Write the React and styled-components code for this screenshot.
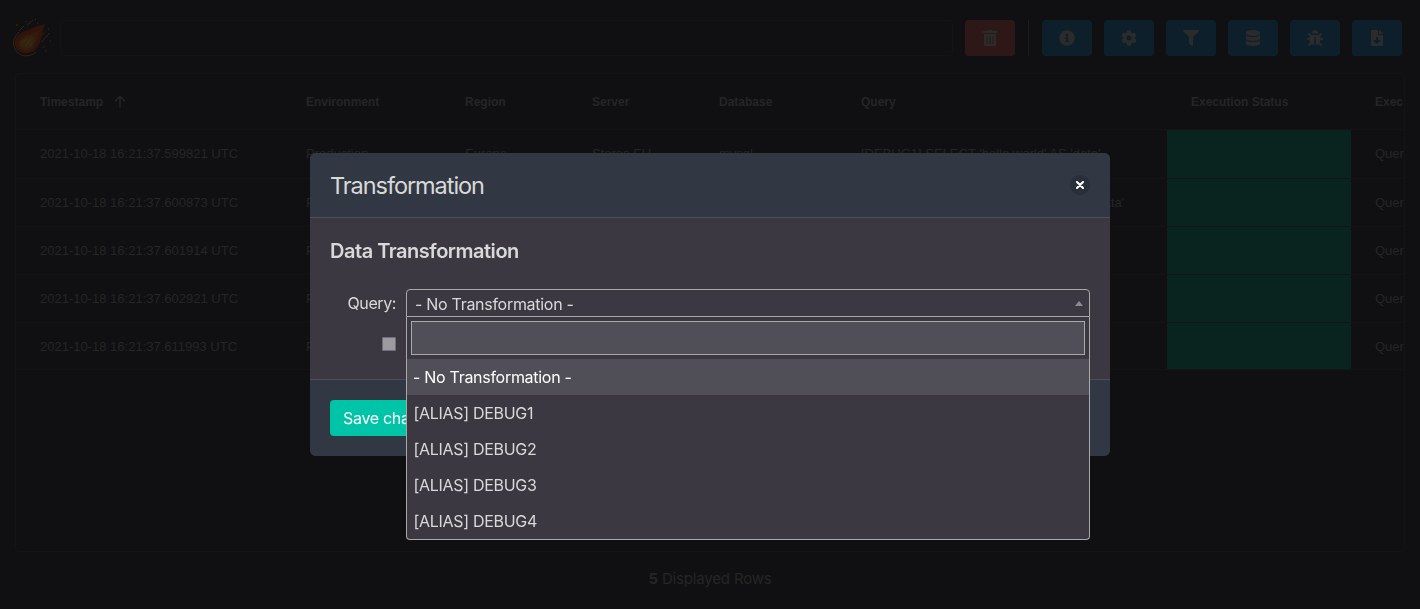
import React from 'react';
import styled, { createGlobalStyle } from 'styled-components';
import {
  FaTrashAlt, FaInfoCircle, FaCog, FaFilter, FaDatabase, FaBug, FaFileDownload,
} from 'react-icons/fa';

const colors = {
  page: '#101012',
  line: '#141415',
  dimText: '#252525',
  body: '#3b3842',
  bar: '#313843',
  divider: '#514d58',
  outline: '#a9a9aa',
  field: '#504e57',
  text: '#d9d9d9',
};

const GlobalStyle = createGlobalStyle`
  * { box-sizing: border-box; }
  body {
    margin: 0;
    background: ${colors.page};
    font-family: Inter, "Liberation Sans", sans-serif;
    overflow: hidden;
  }
`;

const Page = styled.div`
  display: flex;
  flex-direction: column;
  height: 609px;
  overflow: hidden;
  background: ${colors.page};
  color: ${colors.dimText};
`;

const Toolbar = styled.header`
  display: flex;
  align-items: center;
  height: 36px;
  margin: 20px 18px 17px 12px;
`;

const Logo = styled.svg`
  flex: none;
  width: 40px;
  height: 40px;
  margin-right: 8px;
`;

const SearchBox = styled.div`
  flex: 1;
  height: 36px;
  border: 1px solid ${colors.line};
  border-radius: 4px;
`;

const ToolButton = styled.button`
  display: flex;
  align-items: center;
  justify-content: center;
  width: 50px;
  height: 36px;
  margin-left: 12px;
  padding: 0;
  border: 0;
  border-radius: 4px;
  font-size: 16px;
  color: #2b2b2b;
  background: ${(p) => (p.$danger ? '#2e1817' : '#0d1f2b')};
`;

const ToolDivider = styled.span`
  width: 1px;
  height: 36px;
  margin: 0 1px 0 13px;
  background: #1c1c1d;
`;

const TableFrame = styled.main`
  height: 479px;
  margin: 0 15px;
  border: 1px solid ${colors.line};
  border-radius: 4px;
  overflow: hidden;
  font-family: "Liberation Sans", Arial, sans-serif;
`;

const Row = styled.div`
  display: grid;
  grid-template-columns: 266px 159px 127px 127px 142px 330px 184px 1fr;
  height: ${(p) => p.$height || 48}px;
  border-bottom: 1px solid ${colors.line};
  font-size: ${(p) => (p.$head ? 12 : 13)}px;
  font-weight: ${(p) => (p.$head ? 700 : 400)};
  line-height: ${(p) => (p.$head ? 57 : 47)}px;
`;

const Cell = styled.div`
  display: flex;
  align-items: flex-start;
  min-width: 0;
  padding-left: 24px;
  white-space: pre;
  overflow: hidden;
  background: ${(p) => (p.$success ? '#09231e' : 'transparent')};
`;

const SortArrow = styled.svg`
  width: 12px;
  height: 13px;
  margin: 21px 0 0 11px;
`;

const RowCount = styled.footer`
  margin-top: 18px;
  text-align: center;
  font-size: 15px;
  line-height: 18px;
  letter-spacing: -0.17px;
`;

const Overlay = styled.div`
  position: fixed;
  inset: 0;
  display: flex;
  align-items: center;
  justify-content: center;
`;

const Modal = styled.section`
  display: flex;
  flex-direction: column;
  width: 800px;
  height: 303px;
  border-radius: 6px;
  background: ${colors.body};
  color: ${colors.text};
`;

const ModalHeader = styled.header`
  display: flex;
  align-items: center;
  justify-content: space-between;
  height: 65px;
  padding: 0 20px;
  border-bottom: 1px solid ${colors.divider};
  border-radius: 6px 6px 0 0;
  background: ${colors.bar};
`;

const ModalTitle = styled.h1`
  margin: 0;
  padding-top: 2px;
  font-size: 23.5px;
  line-height: 24px;
  font-weight: 400;
  letter-spacing: -1.05px;
`;

const CloseButton = styled.button`
  display: flex;
  align-items: center;
  justify-content: center;
  width: 20px;
  height: 20px;
  padding: 0;
  border: 0;
  border-radius: 50%;
  background: #292f38;
`;

const ModalBody = styled.div`
  display: flex;
  flex-direction: column;
  flex: 1;
  padding: 20px 20px 0;
`;

const SectionTitle = styled.h2`
  margin: 0 0 24px;
  font-size: 20px;
  line-height: 27px;
  font-weight: 600;
  letter-spacing: -0.48px;
`;

const Field = styled.div`
  display: grid;
  grid-template-columns: 66px 1fr;
  column-gap: 10px;
  margin-bottom: 20px;
`;

const FieldLabel = styled.label`
  text-align: right;
  font-size: 16px;
  line-height: 28px;
  letter-spacing: -0.4px;
`;

const SelectWrap = styled.div`
  position: relative;
`;

const SelectBox = styled.div`
  display: flex;
  align-items: center;
  justify-content: space-between;
  height: 28px;
  padding: 2px 6px 0 8px;
  border: 1px solid ${colors.outline};
  border-radius: 4px 4px 0 0;
  background: ${colors.body};
  font-size: 16px;
  letter-spacing: -0.29px;
`;

const Caret = styled.span`
  border: 4px solid transparent;
  border-top: 0;
  border-bottom: 5px solid #8d8b91;
  margin-top: -2px;
`;

const Dropdown = styled.div`
  position: absolute;
  top: 28px;
  left: 0;
  right: 0;
  border: 1px solid ${colors.outline};
  border-top: 0;
  border-radius: 0 0 4px 4px;
  background: ${colors.body};
  overflow: hidden;
`;

const DropdownSearch = styled.div`
  height: 34px;
  margin: 4px;
  border: 1px solid ${colors.outline};
  background: ${colors.field};
`;

const Option = styled.div`
  height: 36px;
  padding-left: ${(p) => (p.$alias ? 6.5 : 6)}px;
  font-size: 16px;
  line-height: 36px;
  letter-spacing: ${(p) => (p.$alias ? -0.3 : -0.29)}px;
  color: ${(p) => (p.$active ? '#fff' : colors.text)};
  background: ${(p) => (p.$active ? colors.field : 'transparent')};
`;

const Checkbox = styled.span`
  justify-self: end;
  width: 14px;
  height: 14px;
  border: 1px solid #716d7c;
  border-radius: 1px;
  background: #9d9b9f;
`;

const ModalFooter = styled.footer`
  display: flex;
  align-items: center;
  height: 77px;
  padding: 0 20px;
  border-top: 1px solid ${colors.divider};
  border-radius: 0 0 6px 6px;
  background: ${colors.bar};
`;

const SaveButton = styled.button`
  height: 36px;
  padding: 0 13px;
  border: 0;
  border-radius: 4px;
  font: inherit;
  font-size: 16px;
  letter-spacing: -0.3px;
  color: #fff;
  background: #00c4a7;
`;

const tools = [FaInfoCircle, FaCog, FaFilter, FaDatabase, FaBug, FaFileDownload];

const headings = ['Timestamp', 'Environment', 'Region', 'Server', 'Database', 'Query', 'Execution Status', 'Exec'];

const rows = [
  ['2021-10-18 16:21:37.599821 UTC', "[DEBUG1] SELECT 'hello world' AS 'data'"],
  ['2021-10-18 16:21:37.600873 UTC', "[DEBUG2] SELECT 'hello world' AS 'sql_data'"],
  ['2021-10-18 16:21:37.601914 UTC', ''],
  ['2021-10-18 16:21:37.602921 UTC', ''],
  ['2021-10-18 16:21:37.611993 UTC', ''],
];

const rowHeights = [49, 48, 48, 48, 47];

const options = ['- No Transformation -', '[ALIAS] DEBUG1', '[ALIAS] DEBUG2', '[ALIAS] DEBUG3', '[ALIAS] DEBUG4'];

function Comet() {
  return (
    <Logo viewBox="0 0 40 40" fill="none">
      <path d="M33 6 23 9l-2 1-10 4c-6 3-9 8-8 13 1 6 7 9 13 8 6-1 10-5 12-11l1-4 4-6-3 1z" fill="#30140c" />
      <path d="M28 12l-9 4c-8 1-13 5-13 11 1 6 8 8 13 5 4-2 5-7 6-11z" fill="#321a0d" />
      <path d="M19 18c-7 1-12 4-11 9 2 5 9 5 12 1 2-3 3-6 2-9z" fill="#32230f" />
      <path d="M11 24l4-3M13 28l6-7M18 28l2-3" stroke="#3a2b15" strokeWidth="1.5" />
      <path d="M7 14C1 20 .5 26 3 31c4 8 15 9 21 3M15 7l6-5M29.500 24l8-9M7 13l5-5M31 30l2-2" stroke="#37240f" strokeWidth="1" />
      <path d="M14 3v1M23 2l1-1M5 6v2M25 5h1M36 11h1M38 23h1M33 33h1" stroke="#3d2810" />
    </Logo>
  );
}

export default function App() {
  return (
    <>
      <GlobalStyle />
      <Page>
        <Toolbar>
          <Comet />
          <SearchBox />
          <ToolButton $danger aria-label="Clear"><FaTrashAlt /></ToolButton>
          <ToolDivider />
          {tools.map((Icon, i) => (
            <ToolButton key={i}><Icon /></ToolButton>
          ))}
        </Toolbar>
        <TableFrame>
          <Row $head $height={56}>
            {headings.map((name, i) => (
              <Cell key={name}>
                {name}
                {i === 0 && (
                  <SortArrow viewBox="0 0 12 13" fill="none" stroke={colors.dimText} strokeWidth="1.6">
                    <path d="M6 12.5V1.5M.8 6.5 6 1.3l5.2 5.2" />
                  </SortArrow>
                )}
              </Cell>
            ))}
          </Row>
          {rows.map(([time, query], i) => (
            <Row key={time} $height={rowHeights[i]}>
              <Cell>{time}</Cell>
              <Cell>Production</Cell>
              <Cell>Europe</Cell>
              <Cell>Stores EU</Cell>
              <Cell>mysql</Cell>
              <Cell>{query}</Cell>
              <Cell $success />
              <Cell>Quer</Cell>
            </Row>
          ))}
        </TableFrame>
        <RowCount><b>5</b> Displayed Rows</RowCount>
      </Page>
      <Overlay>
        <Modal>
          <ModalHeader>
            <ModalTitle>Transformation</ModalTitle>
            <CloseButton aria-label="Close">
              <svg width="8" height="8" viewBox="0 0 8 8" stroke="#fff" strokeWidth="2" strokeLinecap="round">
                <path d="M1 1l6 6M7 1 1 7" />
              </svg>
            </CloseButton>
          </ModalHeader>
          <ModalBody>
            <SectionTitle>Data Transformation</SectionTitle>
            <Field>
              <FieldLabel>Query:</FieldLabel>
              <SelectWrap>
                <SelectBox>
                  {options[0]}
                  <Caret />
                </SelectBox>
                <Dropdown>
                  <DropdownSearch />
                  {options.map((name, i) => (
                    <Option key={name} $active={i === 0} $alias={i > 0}>{name}</Option>
                  ))}
                </Dropdown>
              </SelectWrap>
            </Field>
            <Field>
              <Checkbox />
            </Field>
          </ModalBody>
          <ModalFooter>
            <SaveButton>Save changes</SaveButton>
          </ModalFooter>
        </Modal>
      </Overlay>
    </>
  );
}
